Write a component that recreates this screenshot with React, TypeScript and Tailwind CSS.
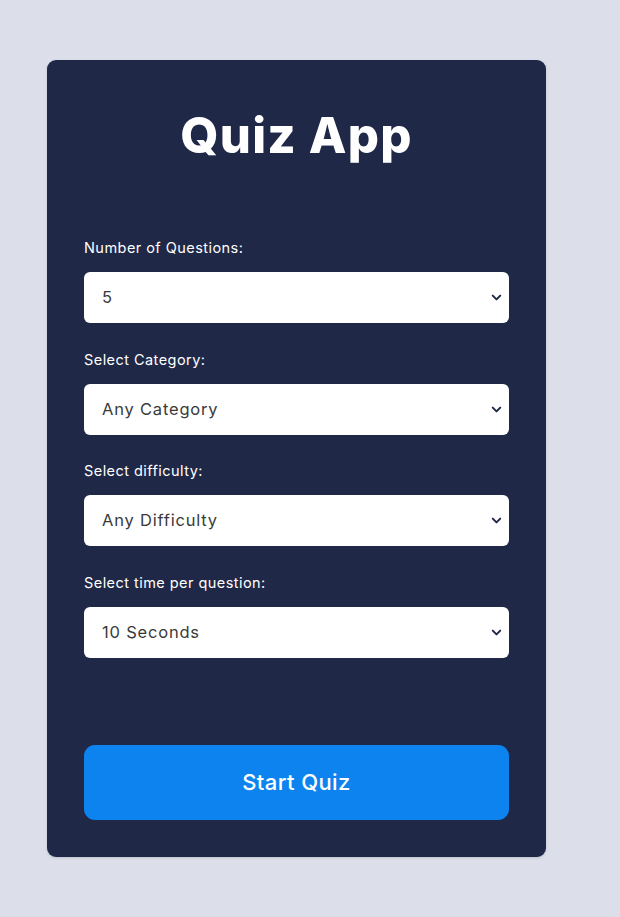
import { ChevronDown } from "lucide-react";

const fields = [
  { label: "Number of Questions:", value: "5" },
  { label: "Select Category:", value: "Any Category" },
  { label: "Select difficulty:", value: "Any Difficulty" },
  { label: "Select time per question:", value: "10 Seconds" },
];

const Field = ({ label, value }: { label: string; value: string }) => (
  <div className="flex flex-col">
    <label className="text-[14.5px] leading-[20px] text-white tracking-[0.45px]">
      {label}
    </label>
    <div className="relative mt-[14px]">
      <div className="h-[51px] w-full rounded-[6px] bg-white pl-[18px] flex items-center text-[16.5px] text-[#3a3a3a] tracking-[0.8px]">
        {value}
      </div>
      <ChevronDown
        size={15}
        strokeWidth={3.2}
        className="absolute right-[5px] top-[18px] text-[#1f2847]"
      />
    </div>
  </div>
);

export default function App() {
  return (
    <div
      className="min-h-screen bg-[#dcdeea] pt-[60px] pl-[47px]"
      style={{ fontFamily: "Inter, 'Open Sans', sans-serif" }}
    >
      <div className="w-[499px] h-[797px] rounded-[9px] bg-[#1f2847] px-[37px] pt-[52px] flex flex-col shadow-sm">
        <h1 className="text-center text-white text-[49px] leading-[48px] font-extrabold tracking-[1.2px]">
          Quiz App
        </h1>

        <div className="mt-[78px] flex flex-col gap-[26.5px]">
          {fields.map((f) => (
            <Field key={f.label} label={f.label} value={f.value} />
          ))}
        </div>

        <button className="mt-[87px] h-[75px] w-full rounded-[11px] bg-[#0d83ef] text-white text-[22px] font-medium tracking-[0.4px]">
          Start Quiz
        </button>
      </div>
    </div>
  );
}
